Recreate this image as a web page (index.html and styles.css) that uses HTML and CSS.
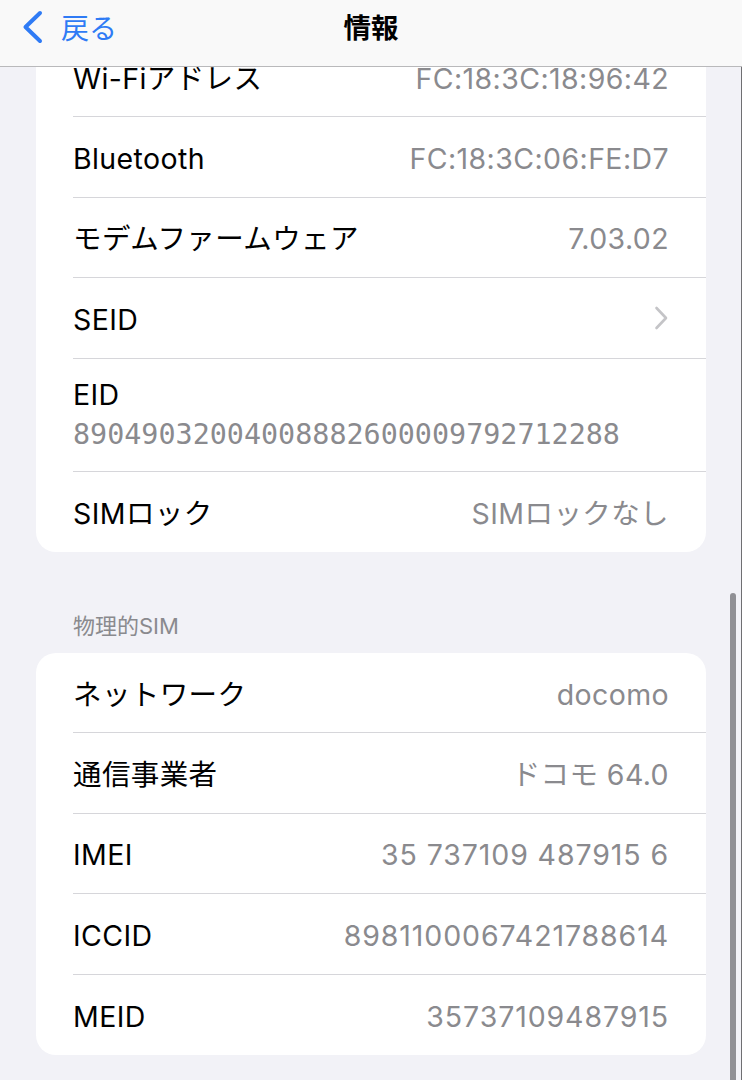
FILE: index.html
```html
<!DOCTYPE html>
<html lang="ja">
<head>
<meta charset="utf-8">
<title>情報</title>
<link rel="stylesheet" href="styles.css">
</head>
<body>
<header class="nav">
  <div class="back">
    <svg class="back-icon" width="26" height="34" viewBox="0 0 26 34"><path d="M20 3 L5.5 17 L20 31" fill="none" stroke="#2f7bf5" stroke-width="4" stroke-linecap="round" stroke-linejoin="round"/></svg>
    <span class="back-text">戻る</span>
  </div>
  <div class="title">情報</div>
</header>

<main class="content">
  <section class="card first">
    <div class="row"><span class="label">Wi-Fiアドレス</span><span class="value">FC:18:3C:18:96:42</span></div>
    <div class="row"><span class="label">Bluetooth</span><span class="value">FC:18:3C:06:FE:D7</span></div>
    <div class="row"><span class="label">モデムファームウェア</span><span class="value">7.03.02</span></div>
    <div class="row"><span class="label">SEID</span><svg class="chev" width="14" height="24" viewBox="0 0 14 24"><path d="M2.5 2 L12 12 L2.5 22" fill="none" stroke="#c4c4c7" stroke-width="2.6" stroke-linecap="round" stroke-linejoin="round"/></svg></div>
    <div class="row tall"><span class="label">EID</span><span class="mono">89049032004008882600009792712288</span></div>
    <div class="row"><span class="label">SIMロック</span><span class="value">SIMロックなし</span></div>
  </section>

  <h2 class="section-title">物理的SIM</h2>

  <section class="card">
    <div class="row"><span class="label">ネットワーク</span><span class="value">docomo</span></div>
    <div class="row"><span class="label">通信事業者</span><span class="value">ドコモ 64.0</span></div>
    <div class="row"><span class="label">IMEI</span><span class="value num">35 737109 487915 6</span></div>
    <div class="row"><span class="label">ICCID</span><span class="value num">8981100067421788614</span></div>
    <div class="row"><span class="label">MEID</span><span class="value num">35737109487915</span></div>
  </section>
</main>

<div class="scrollbar"></div>
<div class="edge"></div>
</body>
</html>
```

FILE: styles.css
```css
* { box-sizing: border-box; }

html, body {
  margin: 0;
  padding: 0;
  background: #f2f2f7;
  font-family: "Inter", "Noto Sans CJK JP", sans-serif;
  color: #000;
  overflow: hidden;
}

.nav {
  position: fixed;
  top: 0;
  left: 0;
  right: 0;
  height: 67px;
  background: #f9f9f9;
  border-bottom: 1px solid #b9b9bb;
  z-index: 10;
  display: flex;
  align-items: center;
  justify-content: center;
}

.back {
  position: absolute;
  left: 20px;
  top: 10px;
  display: flex;
  align-items: center;
  gap: 15px;
  height: 34px;
}

.back-text {
  color: #2f7bf5;
  font-size: 28px;
  line-height: 34px;
  font-family: "Noto Sans CJK JP", sans-serif;
}

.title {
  font-size: 27.5px;
  font-weight: 700;
  font-family: "Noto Sans CJK JP", sans-serif;
  line-height: 34px;
  margin-top: -14px;
}

.content {
  padding: 37px 36px 40px 36px;
}

.card {
  background: #fff;
  border-radius: 20px;
}

.row {
  display: flex;
  align-items: center;
  justify-content: space-between;
  height: 80.4px;
  margin-left: 37px;
  padding-right: 37px;
  padding-top: 4px;
  border-bottom: 1px solid #d6d6da;
}

.row:last-child {
  border-bottom: none;
}

.row.tall {
  height: 113px;
  flex-direction: column;
  align-items: flex-start;
  justify-content: flex-start;
  padding-top: 19px;
  gap: 6px;
}

.label {
  font-size: 28.5px;
  line-height: 34px;
  letter-spacing: 0.4px;
}

.value {
  font-size: 28.5px;
  line-height: 34px;
  color: #8a8a8e;
  letter-spacing: 0.4px;
}

.value.num {
  letter-spacing: 0.9px;
}

.mono {
  font-family: "DejaVu Sans Mono", monospace;
  font-size: 28.4px;
  line-height: 34px;
  color: #8a8a8e;
}

.chev {
  margin-right: 1px;
  margin-top: -4px;
}

.section-title {
  margin: 61px 0 0 37px;
  padding-bottom: 14px;
  font-size: 22px;
  line-height: 26px;
  font-weight: 400;
  color: #8a8a8e;
}

.scrollbar {
  position: fixed;
  left: 730px;
  top: 593px;
  width: 6px;
  height: 520px;
  border-radius: 3px;
  background: #909095;
}

.edge {
  position: fixed;
  right: 0;
  top: 0;
  width: 1px;
  height: 100%;
  background: #6f6f72;
}
```
